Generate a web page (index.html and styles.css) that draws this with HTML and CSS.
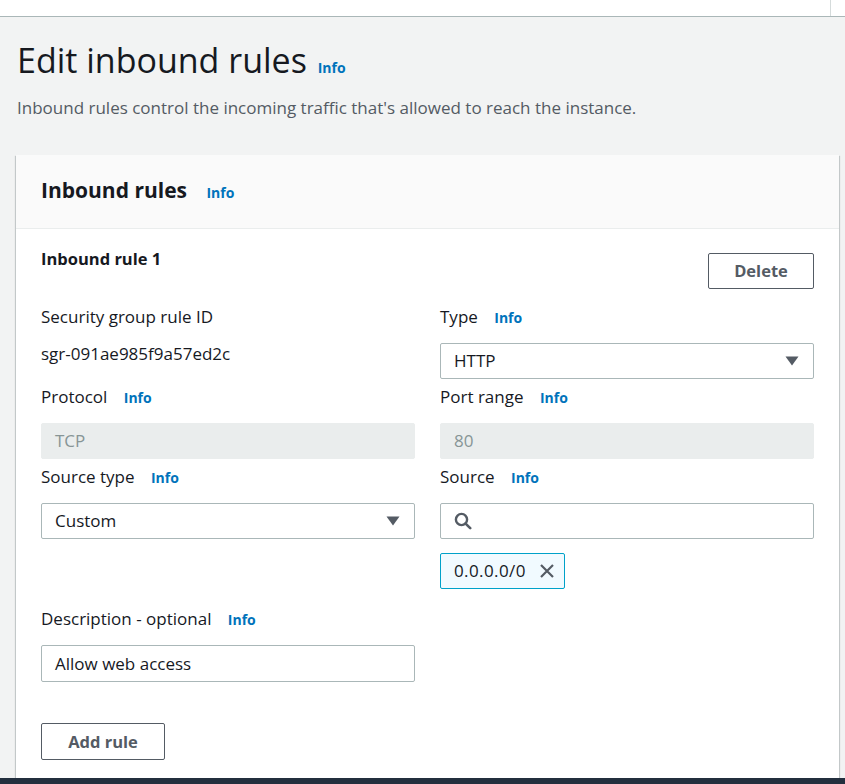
FILE: index.html
```html
<!DOCTYPE html>
<html lang="en">
<head>
<meta charset="utf-8">
<title>Edit inbound rules</title>
<link rel="stylesheet" href="styles.css">
</head>
<body>
<div class="topbar"><div class="topbar-inner"></div></div>
<main class="page">
  <div class="page-head">
    <h1 class="title">Edit inbound rules <a class="info info-title">Info</a></h1>
    <p class="subtitle">Inbound rules control the incoming traffic that's allowed to reach the instance.</p>
  </div>
  <section class="card">
    <header class="card-head">
      <h2 class="card-title">Inbound rules <a class="info">Info</a></h2>
    </header>
    <div class="card-body">
      <div class="rule-head">
        <h3 class="rule-title">Inbound rule 1</h3>
        <button class="btn btn-delete">Delete</button>
      </div>
      <div class="grid">
        <div class="field">
          <div class="label">Security group rule ID</div>
          <div class="value">sgr-091ae985f9a57ed2c</div>
        </div>
        <div class="field">
          <div class="label">Type <a class="info">Info</a></div>
          <div class="control select"><span>HTTP</span><svg class="caret" width="14" height="10" viewBox="0 0 14 10"><path d="M0.5 0.5 H13.5 L7 9.5 Z" fill="#545b64"/></svg></div>
        </div>
        <div class="field">
          <div class="label">Protocol <a class="info">Info</a></div>
          <div class="control disabled">TCP</div>
        </div>
        <div class="field">
          <div class="label">Port range <a class="info">Info</a></div>
          <div class="control disabled">80</div>
        </div>
        <div class="field">
          <div class="label">Source type <a class="info">Info</a></div>
          <div class="control select"><span>Custom</span><svg class="caret" width="14" height="10" viewBox="0 0 14 10"><path d="M0.5 0.5 H13.5 L7 9.5 Z" fill="#545b64"/></svg></div>
        </div>
        <div class="field">
          <div class="label">Source <a class="info">Info</a></div>
          <div class="control search"><svg width="18" height="18" viewBox="0 0 18 18"><circle cx="7.5" cy="7.5" r="5.6" fill="none" stroke="#545b64" stroke-width="2.4"/><path d="M11.6 11.6 L16.2 16.2" stroke="#545b64" stroke-width="2.6" stroke-linecap="round"/></svg></div>
          <div class="tokens">
            <span class="token"><span class="token-text">0.0.0.0/0</span><svg class="x" width="16" height="16" viewBox="0 0 16 16"><path d="M2 2 L14 14 M14 2 L2 14" stroke="#545b64" stroke-width="2.2"/></svg></span>
          </div>
        </div>
        <div class="field">
          <div class="label">Description - optional <a class="info">Info</a></div>
          <div class="control tall">Allow web access</div>
        </div>
      </div>
      <button class="btn btn-add">Add rule</button>
    </div>
  </section>
</main>
<div class="footer-bar"></div>
</body>
</html>
```
FILE: styles.css
```css
* { box-sizing: border-box; }
html, body { margin: 0; padding: 0; }
body {
  background: #f2f3f3;
  font-family: "Open Sans", "Noto Sans", sans-serif;
  color: #16191f;
  font-size: 17px;
  height: 784px;
  overflow: hidden;
}
.topbar {
  height: 17px;
  background: #fff;
  border-bottom: 1px solid #aab7b8;
}
.topbar-inner {
  width: 831px;
  height: 16px;
  border-right: 1px solid #d5dbdb;
}
.page {
  padding: 22px 6px 0 16px;
}
.title {
  margin: 0;
  font-weight: 400;
  font-size: 34px;
  line-height: 42px;
  padding-left: 1px;
}
.info {
  color: #0073bb;
  font-weight: 700;
  font-size: 14px;
  margin-left: 12px;
}
.info-title { margin-left: 2px; }
.subtitle {
  margin: 8px 0 0 1px;
  font-size: 17px;
  line-height: 22px;
  color: #545b64;
}
.card {
  margin-top: 36px;
  background: #fff;
  box-shadow: 0 1px 1px 0 rgba(0,28,36,.3), 1px 1px 1px 0 rgba(0,28,36,.15), -1px 1px 1px 0 rgba(0,28,36,.15);
}
.card-head {
  background: #fafafa;
  border-bottom: 1px solid #eaeded;
  height: 74px;
  padding: 22px 25px 0;
}
.card-title {
  margin: 0;
  font-size: 21px;
  line-height: 26px;
  font-weight: 700;
}
.card-title .info { margin-left: 14px; }
.card-body {
  padding: 20px 25px 18px;
}
.rule-head {
  display: flex;
  justify-content: space-between;
  align-items: flex-start;
}
.rule-title {
  margin: 0;
  font-size: 16.5px;
  line-height: 20px;
  font-weight: 700;
}
.btn {
  font-family: inherit;
  font-size: 16.5px;
  font-weight: 700;
  color: #545b64;
  background: #fff;
  border: 1px solid #545b64;
  border-radius: 2px;
  height: 36px;
  padding: 0 0 1px;
}
.btn-delete { width: 106px; margin-top: 4px; }
.btn-add { width: 124px; height: 37px; margin-top: 41px; display: block; }
.grid {
  margin-top: 17px;
  display: grid;
  grid-template-columns: 1fr 1fr;
  column-gap: 25px;
  row-gap: 7px;
}
.field { display: flex; flex-direction: column; }
.label {
  font-size: 17px;
  line-height: 22px;
  margin-bottom: 14px;
}
.value {
  font-size: 17px;
  line-height: 22px;
  margin-top: 1px;
}
.control {
  height: 36px;
  border: 1px solid #aab7b8;
  border-radius: 2px;
  padding: 0 13px 1px;
  display: flex;
  align-items: center;
  font-size: 17px;
  background: #fff;
}
.control.tall { height: 37px; }
.control.disabled {
  background: #eaeded;
  border-color: #eaeded;
  color: #879596;
}
.control.select { justify-content: space-between; }
.caret { margin-right: 1px; margin-top: 1px; }
.control.search svg { margin-top: 1px; }
.tokens {
  padding-top: 14px;
  padding-bottom: 12px;
}
.token {
  display: inline-flex;
  align-items: center;
  height: 36px;
  padding: 0 9px 1px 13px;
  border: 1px solid #00a1c9;
  border-radius: 2px;
  background: #f1faff;
  font-size: 17px;
}
.token-text { letter-spacing: 0.4px; }
.token .x { margin-left: 13px; margin-top: 1px; }
.footer-bar {
  position: fixed;
  left: 0;
  right: 0;
  bottom: 0;
  height: 6px;
  background: #232f3e;
}
```
